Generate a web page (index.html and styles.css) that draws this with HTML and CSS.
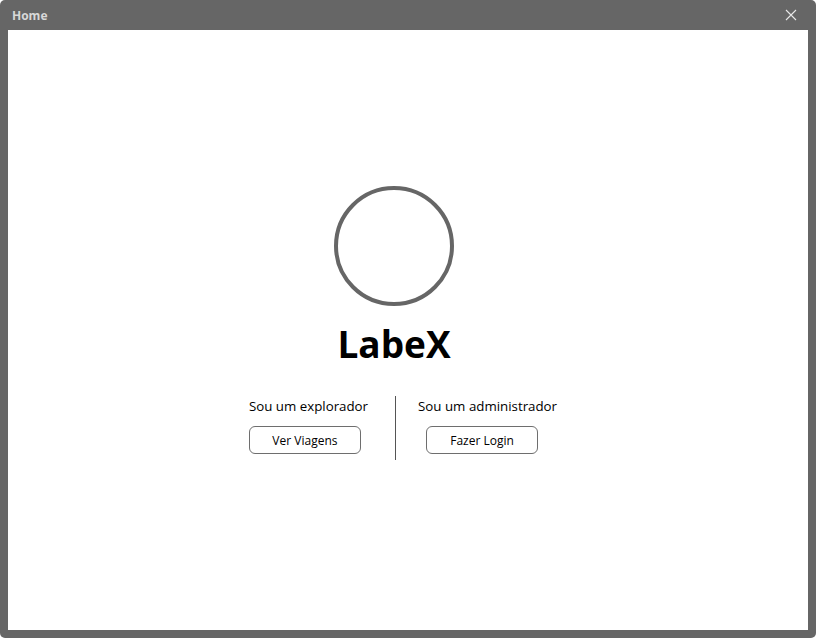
FILE: index.html
```html
<!DOCTYPE html>
<html lang="pt">
<head>
<meta charset="utf-8">
<title>Home</title>
<link rel="stylesheet" href="styles.css">
</head>
<body>
<div class="window">
  <div class="titlebar">
    <span class="title">Home</span>
    <svg class="close" width="12" height="12" viewBox="0 0 12 12"><path d="M1 1L11 11M11 1L1 11" stroke="#e8e8e8" stroke-width="1.1" fill="none"/></svg>
  </div>
  <div class="content">
    <div class="stack">
      <div class="logo"></div>
      <h1 class="brand">LabeX</h1>
      <div class="choices">
        <div class="choice choice-left">
          <p class="label">Sou um explorador</p>
          <button class="btn">Ver Viagens</button>
        </div>
        <div class="divider"></div>
        <div class="choice choice-right">
          <p class="label">Sou um administrador</p>
          <button class="btn btn-right">Fazer Login</button>
        </div>
      </div>
    </div>
  </div>
</div>
</body>
</html>
```
FILE: styles.css
```css
html, body {
  margin: 0;
  padding: 0;
  background: #ffffff;
}
.window {
  width: 816px;
  height: 638px;
  background: #666666;
  border-radius: 5px;
  display: flex;
  flex-direction: column;
  box-sizing: border-box;
  padding: 0 8px 8px 8px;
  font-family: "Open Sans", "Noto Sans", sans-serif;
}
.titlebar {
  height: 30px;
  display: flex;
  align-items: center;
  justify-content: space-between;
  padding: 0 11px 0 4px;
}
.title {
  color: #d8d8d8;
  font-weight: 700;
  font-size: 12px;
  margin-top: 1px;
}
.close {
  display: block;
  margin-top: -1px;
}
.content {
  flex: 1;
  background: #ffffff;
  display: flex;
  justify-content: center;
  padding-top: 156px;
  padding-right: 28px;
}
.stack {
  display: flex;
  flex-direction: column;
  align-items: center;
}
.logo {
  width: 112px;
  height: 112px;
  border: 4px solid #666666;
  border-radius: 50%;
}
.brand {
  margin: 14px 0 0 0;
  font-size: 37px;
  font-weight: 700;
  line-height: 48px;
  color: #000;
}
.choices {
  display: flex;
  margin-top: 28px;
  margin-left: 18px;
}
.choice {
  display: flex;
  flex-direction: column;
  align-items: flex-start;
}
.label {
  margin: 0;
  font-size: 13.3px;
  line-height: 20px;
  color: #000;
}
.btn {
  margin-top: 10px;
  width: 112px;
  height: 28px;
  border: 1px solid #6e6e6e;
  border-radius: 6px;
  background: #fff;
  font-family: "Open Sans", "Noto Sans", sans-serif;
  font-size: 12px;
  color: #000;
  padding: 0;
}
.btn-right {
  margin-left: 8px;
}
.divider {
  width: 1px;
  background: #555;
  height: 64px;
  margin: 0 22px 0 27px;
}
```
